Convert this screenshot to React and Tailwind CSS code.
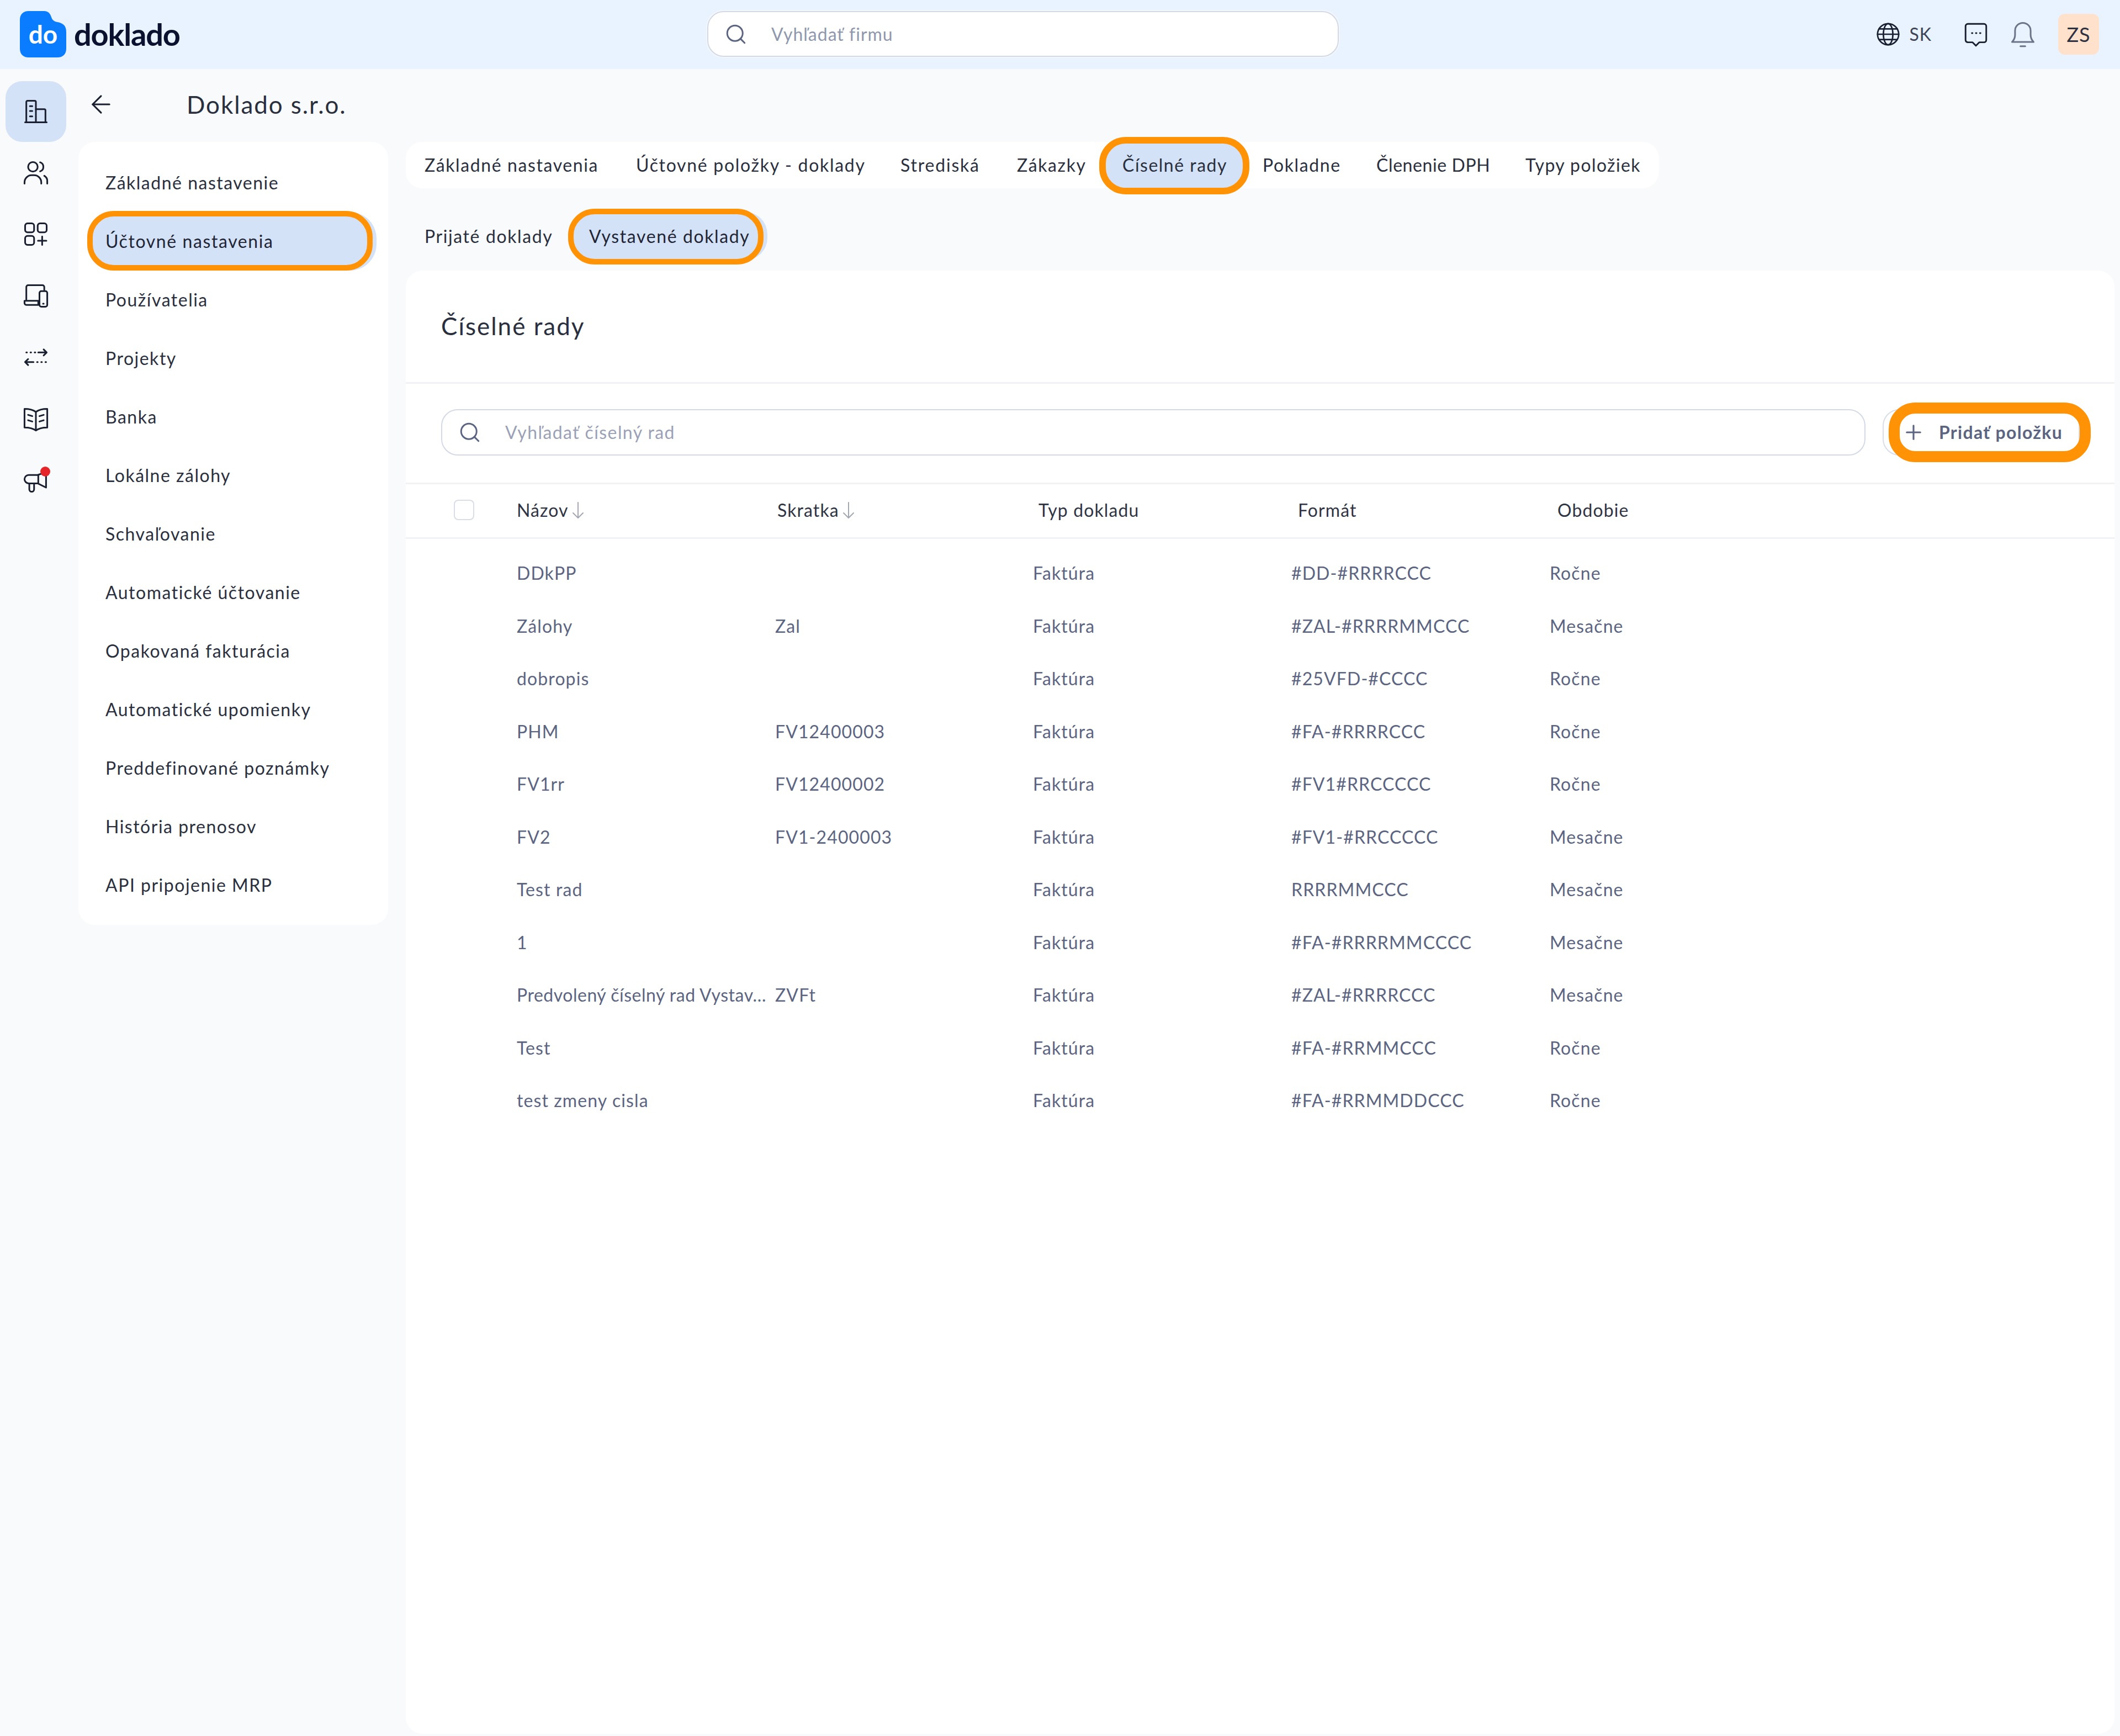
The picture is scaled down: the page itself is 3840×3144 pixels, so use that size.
import { ArrowLeft, Plus, Search } from 'lucide-react'

const menu = [
  'Základné nastavenie',
  'Účtovné nastavenia',
  'Používatelia',
  'Projekty',
  'Banka',
  'Lokálne zálohy',
  'Schvaľovanie',
  'Automatické účtovanie',
  'Opakovaná fakturácia',
  'Automatické upomienky',
  'Preddefinované poznámky',
  'História prenosov',
  'API pripojenie MRP',
]

const tabs = [
  ['Základné nastavenia', 'w-[383px] tracking-[1.600px]'],
  ['Účtovné položky - doklady', 'w-[479px] tracking-[1.700px]'],
  ['Strediská', 'w-[211px] tracking-[1.800px]'],
  ['Zákazky', 'w-[191px] tracking-[1.600px]'],
  ['Číselné rady', 'w-[254px] tracking-[1.500px]'],
  ['Pokladne', 'w-[206px] tracking-[1.600px]'],
  ['Členenie DPH', 'w-[270px] tracking-[0.600px]'],
  ['Typy položiek', 'w-[276px] tracking-[1.400px]'],
]

const rows = [
  ['DDkPP', '', '#DD-#RRRRCCC', 'Ročne'],
  ['Zálohy', 'Zal', '#ZAL-#RRRRMMCCC', 'Mesačne'],
  ['dobropis', '', '#25VFD-#CCCC', 'Ročne'],
  ['PHM', 'FV12400003', '#FA-#RRRRCCC', 'Ročne'],
  ['FV1rr', 'FV12400002', '#FV1#RRCCCCC', 'Ročne'],
  ['FV2', 'FV1-2400003', '#FV1-#RRCCCCC', 'Mesačne'],
  ['Test rad', '', 'RRRRMMCCC', 'Mesačne'],
  ['1', '', '#FA-#RRRRMMCCCC', 'Mesačne'],
  ['Predvolený číselný rad Vystav…', 'ZVFt', '#ZAL-#RRRRCCC', 'Mesačne'],
  ['Test', '', '#FA-#RRMMCCC', 'Ročne'],
  ['test zmeny cisla', '', '#FA-#RRMMDDCCC', 'Ročne'],
]

function Icon({ children, className = 'h-[52px] w-[52px]' }) {
  return (
    <svg viewBox="0 0 24 24" fill="none" stroke="#1a2030" strokeWidth="1.4" strokeLinecap="round" strokeLinejoin="round" className={className}>
      {children}
    </svg>
  )
}

function SortArrow() {
  return (
    <svg viewBox="0 0 22 32" fill="none" stroke="#a3a7b0" strokeWidth="2" strokeLinecap="round" strokeLinejoin="round" className="ml-[6px] h-[32px] w-[22px]">
      <path d="M11 2v28M2 21l9 9 9-9" />
    </svg>
  )
}

const railIcons = [
  <Icon key="building">
    <path d="M4 21V4a1 1 0 0 1 1-1h6a1 1 0 0 1 1 1v17" />
    <path d="M12 10h7a1 1 0 0 1 1 1v10" />
    <path d="M3 21h18" />
    <path d="M7 7.5h2M7 11.5h2M7 16h2" />
  </Icon>,
  <Icon key="users">
    <circle cx="9.5" cy="7" r="4" />
    <path d="M2.5 21v-1a6 6 0 0 1 6-6h2a6 6 0 0 1 6 6v1" />
    <path d="M15.5 3.2a4 4 0 0 1 0 7.6" />
    <path d="M19 14.5a5 5 0 0 1 2.5 4.5v2" />
  </Icon>,
  <Icon key="apps">
    <rect x="3" y="3" width="7.5" height="7.5" rx="2" />
    <rect x="13.5" y="3" width="7.5" height="7.5" rx="2" />
    <rect x="3" y="13.5" width="7.5" height="7.5" rx="2" />
    <path d="M17.25 14v7M13.75 17.5h7" />
  </Icon>,
  <Icon key="devices">
    <path d="M4 15V4.5A1.5 1.5 0 0 1 5.5 3h12A1.5 1.5 0 0 1 19 4.5V7" />
    <path d="M2.5 16H14v3.5H4A1.5 1.5 0 0 1 2.5 18z" />
    <rect x="15" y="8" width="6.5" height="13" rx="1.5" />
    <path d="M18 18.5h.5" />
  </Icon>,
  <Icon key="transfer">
    <path d="M14 8h7M18.5 5.5 21 8l-2.5 2.5" />
    <path d="M4 8h.5M7.5 8H8M11 8h.5" />
    <path d="M3 16h7M5.5 13.5 3 16l2.5 2.5" />
    <path d="M13 16h.5M16.5 16h.5M20 16h.5" />
  </Icon>,
  <Icon key="book">
    <path d="M12 6C10 4.5 6 3.5 2.5 3.5v15.5c3.5 0 7.5 1 9.5 2.5 2-1.5 6-2.5 9.5-2.5V3.5C18 3.5 14 4.5 12 6z" />
    <path d="M12 6v15.5" />
    <path d="M5.5 8.5 9 9.5M5.5 13 9 14M18.5 8.5 15 9.5M18.5 13 15 14" />
  </Icon>,
  <div key="megaphone" className="relative flex">
    <Icon>
      <path d="M20.5 5v13l-7-3.5H6A3.5 3.5 0 0 1 2.5 11v0A3.5 3.5 0 0 1 6 7.500h7.500z" />
      <path d="M6.500 15v4.500a2 2 0 0 0 4 0V15" />
      <path d="M14 8v6.500" />
    </Icon>
    <span className="absolute right-[0px] top-[1px] h-[18px] w-[18px] rounded-full bg-[#e5252a]" />
  </div>,
]

// orange annotation drawn over the selected item
function Ring({ className }) {
  return <span className={`pointer-events-none absolute rounded-[48px] border-[#ff9205] ${className}`} />
}

function Header() {
  return (
    <header className="flex h-[125px] items-center bg-[#e9f3ff] pb-[2px]">
      <div className="flex w-[1281px] items-center pl-[36px]">
        <div className="relative flex h-[84px] w-[84px] items-center justify-center">
          <svg viewBox="0 0 84 84" className="absolute inset-0 h-full w-full">
            <path d="M16 0h28c8 0 11 5 13 11 1.500 5 5 8 11 9 10 2 16 6 16 18v30c0 10-6 16-16 16H16C6 84 0 78 0 68V16C0 6 6 0 16 0z" fill="#0a7cff" />
          </svg>
          <span className="relative text-[46px] font-bold text-white">do</span>
        </div>
        <span className="ml-[14px] text-[56px] font-bold tracking-[-1.200px] text-[#0b1230]">doklado</span>
      </div>
      <div className="flex h-[83px] w-[1144px] items-center rounded-[30px] border-2 border-[#d3d9e6] bg-white pl-[29px] shadow-[0_0_0_2px_#f4f7fb]">
        <Search size={42} strokeWidth={1.700} color="#5b6480" />
        <span className="ml-[43px] text-[32px] tracking-[1px] text-[#8f97ad]">Vyhľadať firmu</span>
      </div>
      <div className="ml-auto flex items-center pr-[38px]">
        <Icon className="h-[46px] w-[46px]">
          <circle cx="12" cy="12" r="10" />
          <ellipse cx="12" cy="12" rx="4.500" ry="10" />
          <path d="M2 12h20M3.500 7h17M3.500 17h17" />
        </Icon>
        <span className="ml-[15px] text-[32px] tracking-[1px] text-[#3d4457]">SK</span>
        <Icon className="ml-[55px] h-[50px] w-[50px]">
          <path d="M5 3h14a2 2 0 0 1 2 2v12a2 2 0 0 1-2 2h-4l-3 3-3-3H5a2 2 0 0 1-2-2V5a2 2 0 0 1 2-2z" />
          <path d="M8.500 11h.5M12 11h.5M15.500 11h.5" />
        </Icon>
        <svg viewBox="0 0 24 24" fill="none" stroke="#6b7488" strokeWidth="1.400" strokeLinecap="round" strokeLinejoin="round" className="ml-[34px] h-[52px] w-[52px]">
          <path d="M3 18.500c1.500-1.500 2.500-3 2.500-6V9a6.500 6.500 0 0 1 13 0v3.500c0 3 1 4.500 2.500 6z" />
          <path d="M10 22h4" />
        </svg>
        <div className="ml-[38px] flex h-[74px] w-[74px] items-center justify-center rounded-[12px] bg-[#ffe1cc] text-[36px] tracking-[1px] text-[#2d3142]">
          ZS
        </div>
      </div>
    </header>
  )
}

function Rail() {
  return (
    <div className="flex w-[142px] flex-col pt-[22px]">
      {railIcons.map((icon, i) => (
        <div
          key={i}
          className={`ml-[10px] flex w-[110px] items-center justify-center rounded-[30px] ${i === 0 ? 'h-[110px] bg-[#d4e2f8]' : 'h-[111.500px]'}`}
        >
          {icon}
        </div>
      ))}
    </div>
  )
}

function SideMenu() {
  return (
    <div className="w-[561px]">
      <div className="flex h-[132px] items-center pb-[4px]">
        <ArrowLeft size={52} strokeWidth={1.400} color="#1a2030" className="ml-[15px]" />
        <h1 className="ml-[129px] text-[44px] tracking-[1.900px] text-[#2a2f3d]">Doklado s.r.o.</h1>
      </div>
      <nav className="h-[1418px] rounded-[30px] bg-white pt-[21px]">
        {menu.map((item, i) => (
          <div key={item} className="flex h-[106px] items-center">
            {i === 1 ? (
              <div className="relative ml-[16px] flex h-[106px] w-[524px] items-center rounded-[48px] bg-[#d4e2f8] pl-[33px] text-[32px] tracking-[1.600px] text-[#1f2535]">
                {item}
                <Ring className="-top-[2px] bottom-0 left-0 right-[7px] border-[10px]" />
              </div>
            ) : (
              <span className="pl-[49px] text-[32px] tracking-[1.500px] text-[#2a2f3d]">{item}</span>
            )}
          </div>
        ))}
      </nav>
    </div>
  )
}

function Tabs() {
  return (
    <>
      <div className="flex h-[84px] w-[2270px] rounded-[30px] bg-white">
        {tabs.map(([label, width]) => {
          const active = label === 'Číselné rady'
          return (
            <div
              key={label}
              className={`relative flex items-center pl-[34px] text-[32px] text-[#2a2f3d] ${width} ${active ? 'rounded-[40px] bg-[#d4e2f8]' : ''}`}
            >
              {label}
              {active && <Ring className="-top-[9px] -bottom-[11px] -left-[8px] -right-[10px] border-[12px]" />}
            </div>
          )
        })}
      </div>
      <div className="flex h-[149px] items-center pb-[19px] pt-[43px]">
        <div className="flex h-[87px] w-[294px] items-center pl-[34px] text-[32px] tracking-[1.600px] text-[#2a2f3d]">Prijaté doklady</div>
        <div className="relative flex h-[87px] w-[361px] items-center rounded-[40px] bg-[#d4e2f8] pl-[38px] text-[32px] tracking-[1.600px] text-[#1f2535]">
          Vystavené doklady
          <Ring className="-top-[6px] -bottom-[8px] left-0 right-[7px] border-[10px]" />
        </div>
      </div>
    </>
  )
}

function Table() {
  return (
    <div className="text-[32px] tracking-[1.100px]">
      <div className="flex h-[99px] items-center border-b-[3px] border-[#f0f2f6] pb-[2px] pl-[87px] text-[#2f3443]">
        <span className="h-[37px] w-[37px] rounded-[8px] border-2 border-[#d9dde6]" />
        <div className="ml-[77px] flex w-[472px] items-center">
          Názov
          <SortArrow />
        </div>
        <div className="flex w-[473px] items-center">
          Skratka
          <SortArrow />
        </div>
        <div className="w-[470px]">Typ dokladu</div>
        <div className="w-[470px]">Formát</div>
        <div>Obdobie</div>
      </div>
      <div className="pt-[15px] text-[#5b6480]">
        {rows.map((row, i) => (
          <div key={i} className="grid h-[95.500px] grid-cols-[468px_467px_468px_468px_1fr] items-center pl-[201px]">
            <div className={`whitespace-nowrap ${i === 8 ? 'tracking-[0.500px]' : ''}`}>{row[0]}</div>
            <div>{row[1]}</div>
            <div>Faktúra</div>
            <div>{row[2]}</div>
            <div>{row[3]}</div>
          </div>
        ))}
      </div>
    </div>
  )
}

function MainCard() {
  return (
    <div className="h-[2650px] w-[3095px] rounded-[30px] bg-white">
      <div className="flex h-[204.500px] items-center border-b-[3px] border-[#f0f2f6] pb-[2px] pl-[64px]">
        <h2 className="text-[44px] tracking-[2px] text-[#2a2f3d]">Číselné rady</h2>
      </div>
      <div className="flex h-[182px] items-center border-b-[3px] border-[#f0f2f6] pb-[2px] pl-[64px]">
        <div className="flex h-[84px] w-[2580px] items-center rounded-[30px] border-2 border-[#d3d9e6] pl-[29px]">
          <Search size={42} strokeWidth={1.700} color="#5b6480" />
          <span className="ml-[43px] text-[32px] tracking-[1.400px] text-[#9aa1b6]">Vyhľadať číselný rad</span>
        </div>
        <div className="ml-[31px] flex h-[84px] w-[357px] items-center rounded-[30px] border-2 border-[#d9dde6]">
          <div className="relative flex h-[84px] w-[356px] items-center pl-[33px]">
            <Plus size={42} strokeWidth={1.800} color="#5b6480" />
            <span className="ml-[25px] text-[32px] font-bold tracking-[1.300px] text-[#5b6480]">Pridať položku</span>
            <Ring className="-inset-y-[12px] left-[9px] -right-[22px] bg-transparent border-[20px]" />
          </div>
        </div>
      </div>
      <Table />
    </div>
  )
}

export default function App() {
  return (
    <div className="h-[3144px] w-[3840px] overflow-hidden bg-[#f9fafc] font-['Lato',sans-serif]">
      <Header />
      <div className="flex">
        <Rail />
        <SideMenu />
        <div className="ml-[32px] pt-[132px]">
          <Tabs />
          <MainCard />
        </div>
      </div>
    </div>
  )
}
